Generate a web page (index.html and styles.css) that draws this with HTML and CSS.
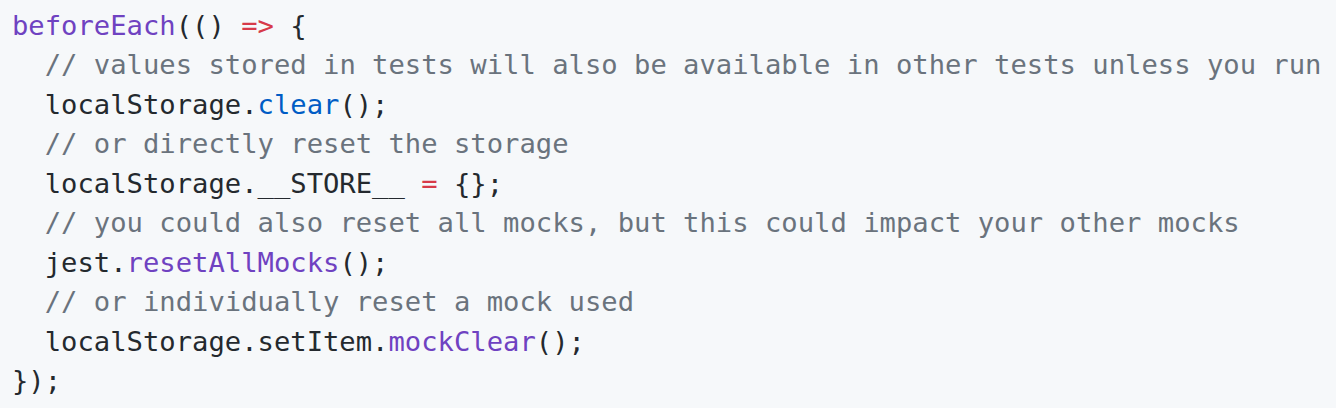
FILE: index.html
```html
<!DOCTYPE html>
<html>
<head>
<meta charset="utf-8">
<link rel="stylesheet" href="styles.css">
</head>
<body>
<pre class="code"><span class="fn">beforeEach</span>(() <span class="kw">=&gt;</span> {
  <span class="cm">// values stored in tests will also be available in other tests unless you run</span>
  localStorage.<span class="c1">clear</span>();
  <span class="cm">// or directly reset the storage</span>
  localStorage.__STORE__ <span class="kw">=</span> {};
  <span class="cm">// you could also reset all mocks, but this could impact your other mocks</span>
  jest.<span class="fn">resetAllMocks</span>();
  <span class="cm">// or individually reset a mock used</span>
  localStorage.setItem.<span class="fn">mockClear</span>();
});</pre>
</body>
</html>
```
FILE: styles.css
```css
html, body {
  margin: 0;
  padding: 0;
  background: #f6f8fa;
  overflow: hidden;
}
.code {
  margin: 0;
  padding: 6px 12px;
  font-family: "DejaVu Sans Mono", "Liberation Mono", monospace;
  font-size: 27.2px;
  line-height: 39.45px;
  color: #24292e;
  white-space: pre;
}
.fn { color: #6f42c1; }
.kw { color: #d73a49; }
.c1 { color: #005cc5; }
.cm { color: #6a737d; }
```
